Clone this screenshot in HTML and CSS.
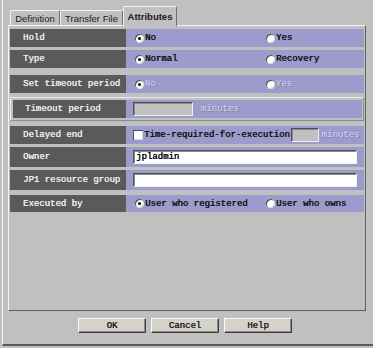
FILE: index.html
```html
<!DOCTYPE html>
<html>
<head>
<meta charset="utf-8">
<link rel="stylesheet" href="styles.css">
</head>
<body>
<div class="window">
  <div class="tabs">
    <div class="tab t-def">Definition</div>
    <div class="tab t-tf">Transfer File</div>
    <div class="tab t-attr active">Attributes</div>
  </div>
  <div class="panel">
    <div class="row r-hold">
      <div class="label">Hold</div>
      <div class="value">
        <span class="opt opt1"><span class="radio on"></span>No</span>
        <span class="opt"><span class="radio"></span>Yes</span>
      </div>
    </div>
    <div class="row r-type">
      <div class="label">Type</div>
      <div class="value">
        <span class="opt opt1"><span class="radio on"></span>Normal</span>
        <span class="opt"><span class="radio"></span>Recovery</span>
      </div>
    </div>
    <div class="row r-set">
      <div class="label">Set timeout period</div>
      <div class="value">
        <span class="opt opt1 dis"><span class="radio on"></span>No</span>
        <span class="opt dis"><span class="radio"></span>Yes</span>
      </div>
    </div>
    <div class="group">
      <div class="row r-inner">
        <div class="label label-in">Timeout period</div>
        <div class="value value-box">
          <span class="field field-dis f-timeout"></span>
          <span class="dis unit">minutes</span>
        </div>
      </div>
    </div>
    <div class="row r-delay">
      <div class="label">Delayed end</div>
      <div class="value value-box">
        <span class="check"></span>
        <span class="opt-text">Time-required-for-execution</span>
        <span class="field field-dis f-delay"></span>
        <span class="dis unit2">minutes</span>
      </div>
    </div>
    <div class="row r-owner">
      <div class="label">Owner</div>
      <div class="value value-box">
        <span class="field field-text">jpladmin</span>
      </div>
    </div>
    <div class="row r-jp1">
      <div class="label">JP1 resource group</div>
      <div class="value value-box">
        <span class="field field-text"></span>
      </div>
    </div>
    <div class="row r-exec">
      <div class="label">Executed by</div>
      <div class="value">
        <span class="opt opt1"><span class="radio on"></span>User who registered</span>
        <span class="opt"><span class="radio"></span>User who owns</span>
      </div>
    </div>
  </div>
  <div class="buttons">
    <div class="btn">OK</div>
    <div class="btn">Cancel</div>
    <div class="btn">Help</div>
  </div>
</div>
</body>
</html>
```
FILE: styles.css
```css
* { box-sizing: border-box; }
body {
  margin: 0;
  width: 373px;
  height: 348px;
  overflow: hidden;
  background: #c0c0c0;
  font-family: "Liberation Mono", "Courier New", monospace;
  font-size: 9px;
  color: #111;
}
.window {
  margin-left: 2px;
  height: 346px;
  border-left: 1px solid #f4f4f4;
  border-bottom: 2px solid #5a5a5a;
  padding-left: 5px;
}
.tabs {
  height: 25px;
  display: flex;
  align-items: flex-end;
  padding-left: 2px;
  position: relative;
  z-index: 2;
}
.tab {
  height: 15px;
  background: #c0c0c0;
  border-top: 1px solid #f4f4f4;
  border-left: 1px solid #f4f4f4;
  border-right: 1px solid #707070;
  border-radius: 2px 2px 0 0;
  font-family: "Liberation Sans", Arial, sans-serif;
  font-size: 9.5px;
  color: #1a1a1a;
  display: flex;
  align-items: center;
  justify-content: center;
}
.t-def { width: 50px; }
.t-tf { width: 63px; }
.t-attr {
  width: 54px;
  height: 20px;
  margin-bottom: -1px;
  font-weight: bold;
  padding-bottom: 1px;
}
.panel {
  width: 358px;
  height: 286px;
  border-top: 1px solid #f4f4f4;
  border-left: 1px solid #f4f4f4;
  border-right: 1px solid #606060;
  border-bottom: 1px solid #606060;
  padding: 3px 1px 0 1px;
}
.row {
  display: flex;
  height: 18px;
}
.label {
  width: 116px;
  background: #5a5a5a;
  color: #ececec;
  padding-left: 13px;
  display: flex;
  align-items: center;
  text-shadow: 0.3px 0 0 #ececec;
}
.value {
  flex: 1;
  background: #9c9ccc;
  padding-left: 9px;
  display: flex;
  align-items: center;
  text-shadow: 0.4px 0 0 #111;
}
.value-box { padding-left: 7px; }
.r-type { margin-top: 3px; }
.r-set { margin-top: 7px; }
.group {
  margin-top: 4px;
  height: 24px;
  border-top: 1px solid #ececec;
  border-left: 1px solid #ececec;
  border-right: 1px solid #8a8a8a;
  border-bottom: 1px solid #8a8a8a;
  padding: 2px 1px 2px 2px;
}
.label-in { width: 113px; padding-left: 12px; }
.r-delay { margin-top: 5px; }
.r-owner { margin-top: 3px; height: 20px; }
.r-jp1 { margin-top: 3px; height: 20px; }
.r-exec { margin-top: 5px; height: 17px; }
.opt {
  display: flex;
  align-items: center;
}
.opt1 { width: 131px; }
.radio {
  width: 9px;
  height: 9px;
  border-radius: 50%;
  background: #fff;
  box-shadow: inset 1px 1px 0 #505050, inset -1px -1px 0 #d8d8d8;
  margin-right: 1px;
  position: relative;
}
.radio.on::after {
  content: "";
  position: absolute;
  left: 3px;
  top: 3px;
  width: 3px;
  height: 3px;
  border-radius: 50%;
  background: #000;
}
.dis {
  color: #d4d4ec;
  text-shadow: 1px 1px 0 #8080a8;
}
.field {
  height: 14px;
  border-top: 1px solid #505050;
  border-left: 1px solid #505050;
  border-right: 1px solid #f0f0f0;
  border-bottom: 1px solid #f0f0f0;
  box-shadow: inset 1px 1px 0 #8a8a8a;
}
.field-dis { background: #c0c0c0; }
.f-timeout { width: 60px; margin-right: 8px; }
.f-delay { width: 28px; margin-left: 1px; margin-right: 3px; }
.field-text {
  width: 224px;
  background: #fff;
  padding-left: 2px;
  display: flex;
  align-items: center;
  color: #000;
}
.check {
  width: 10px;
  height: 10px;
  background: #fff;
  box-shadow: inset 1px 1px 0 #505050, inset -1px -1px 0 #d8d8d8;
  margin-right: 1px;
}
.opt-text { white-space: nowrap; }
.buttons {
  display: flex;
  gap: 5px;
  padding-left: 70px;
  margin-top: 7px;
}
.btn {
  width: 68px;
  height: 15px;
  background: #d6d2ca;
  border-top: 1px solid #fafafa;
  border-left: 1px solid #fafafa;
  border-right: 1px solid #404040;
  border-bottom: 1px solid #404040;
  box-shadow: inset -1px -1px 0 #8a8a8a;
  display: flex;
  align-items: center;
  justify-content: center;
  color: #222;
  text-shadow: 0.3px 0 0 #222;
}
```
